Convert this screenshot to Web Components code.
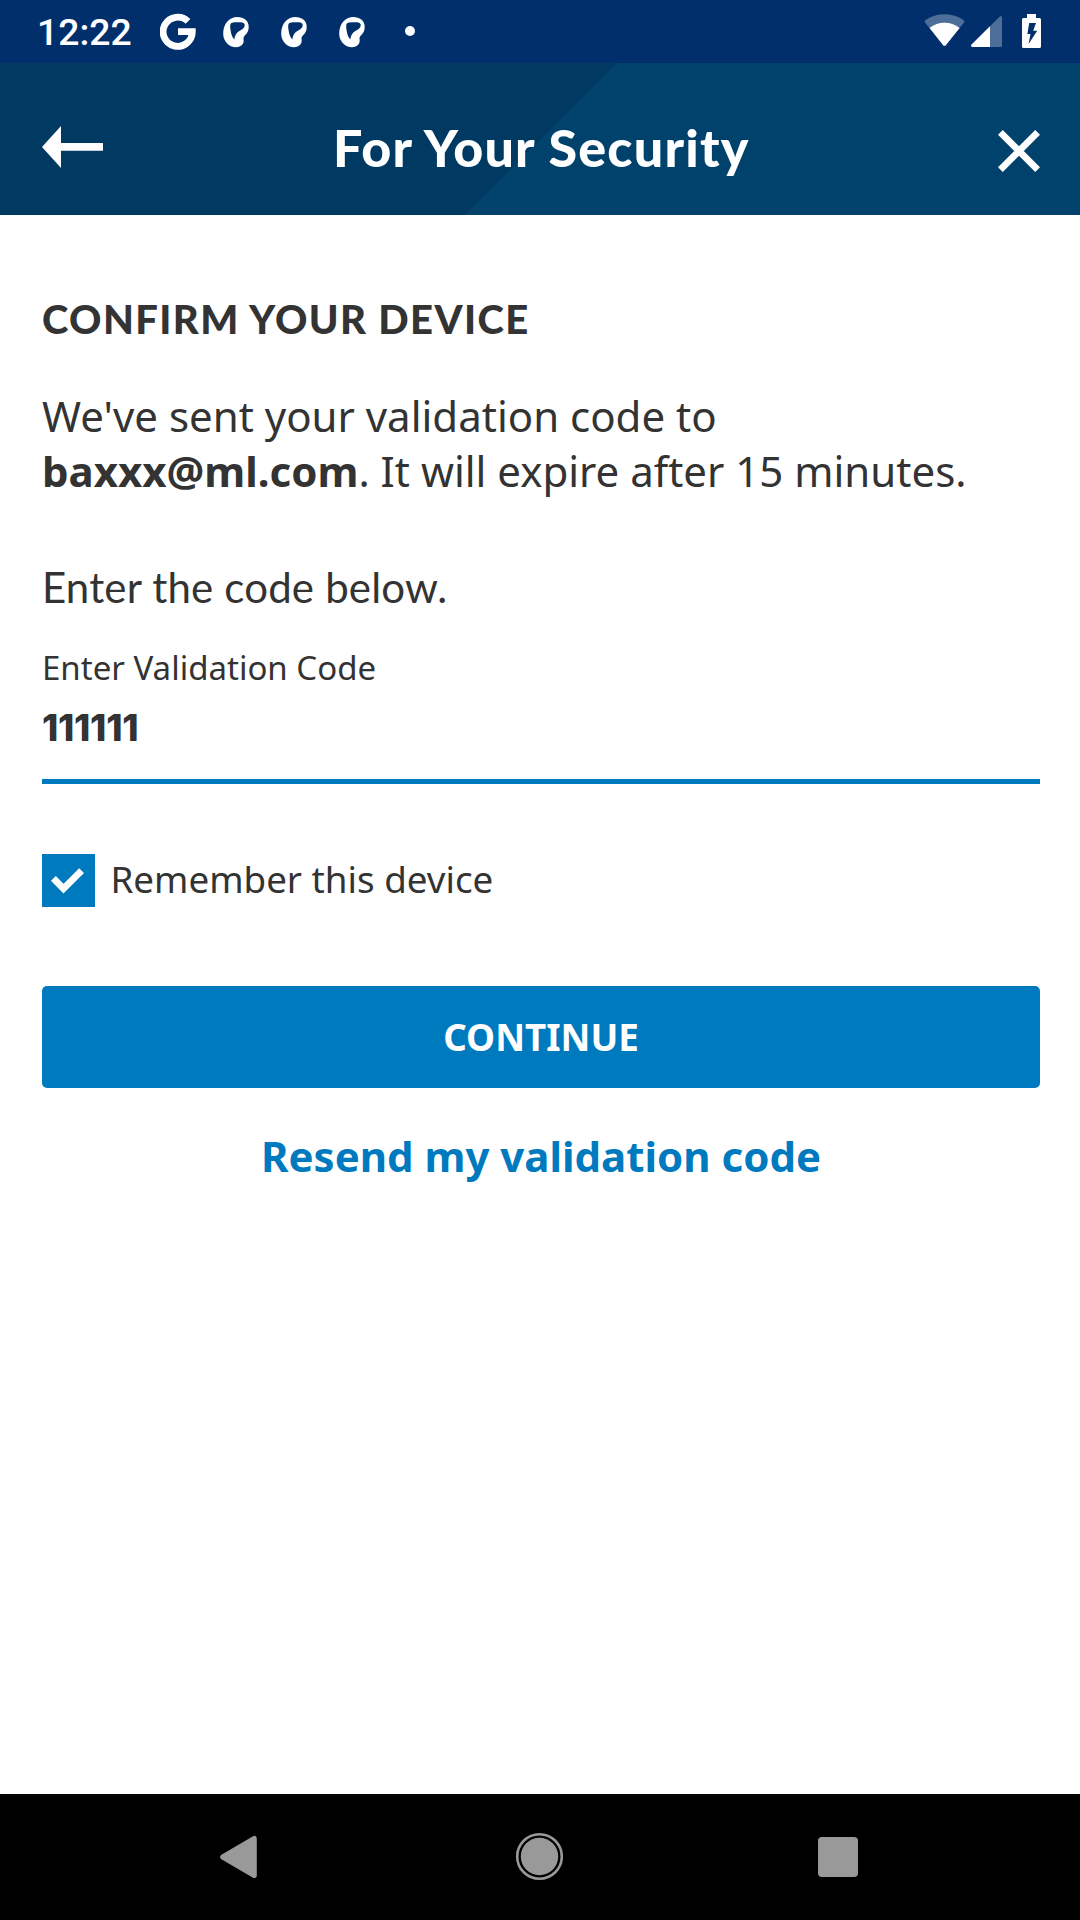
<!DOCTYPE html>
<html lang="en">
<head>
<meta charset="utf-8">
<title>For Your Security</title>
<style>
html, body { margin: 0; height: 100%; background: #fff; }
body { font-family: "Noto Sans", sans-serif; color: #333; }
</style>
</head>
<body>
<device-screen>
  <status-bar slot="status" time="12:22"></status-bar>
  <title-bar slot="header">For Your Security</title-bar>
  <confirm-form>
    <span slot="heading">CONFIRM YOUR DEVICE</span>
    <span slot="message">We've sent your validation code to<br><b>baxxx@ml.com</b>. It will expire after 15 minutes.</span>
    <span slot="prompt">Enter the code below.</span>
    <code-field label="Enter Validation Code" value="111111"></code-field>
    <check-option>Remember this device</check-option>
    <primary-button>CONTINUE</primary-button>
    <link-button>Resend my validation code</link-button>
  </confirm-form>
  <nav-bar slot="nav"></nav-bar>
</device-screen>
<script>
const define = (name, html, setup) => {
  const template = document.createElement('template');
  template.innerHTML = html;
  customElements.define(name, class extends HTMLElement {
    connectedCallback() {
      if (this.shadowRoot) return;
      const root = this.attachShadow({ mode: 'open' });
      root.append(template.content.cloneNode(true));
      if (setup) setup(root, this);
    }
  });
};

define('device-screen', `
<style>
:host { display: flex; flex-direction: column; width: 1080px; height: 1920px; background: #fff; overflow: hidden; }
main { flex: 1; min-height: 0; }
</style>
<slot name="status"></slot>
<slot name="header"></slot>
<main><slot></slot></main>
<slot name="nav"></slot>`);

define('mask-icon', `
<style>:host { display: block; width: 26px; height: 31px; } svg { display: block; }</style>
<svg width="26" height="31" viewBox="0 0 26 31">
  <path fill="#fff" fill-rule="evenodd" d="M14.5 0C20.5 0 25.6 3.4 25.7 9.5C25.8 13.5 24.6 15.6 22.8 17.5C21 19.2 20.2 20.3 20.6 22.5C21.2 26.5 18.6 30.2 13 30.2C6 30.2 .2 24.5 .2 16.5C.2 7 6 0 14.5 0ZM8.3 6C7 7 7 9.5 7.4 12C8 16 8.7 19.8 11.3 22.6C11.8 18.6 13.3 15.7 16.3 14C19.3 12.3 21.7 11 21.7 8C21.7 5.9 19.5 5.2 15.5 5.2C12.5 5.2 9.8 5 8.3 6Z"/>
</svg>`);

define('status-bar', `
<style>
:host { display: flex; box-sizing: border-box; height: 63px; padding: 0 39px 0 37px; background: #002f6c; color: #fff; }
time { font: 500 37.3px/56px Roboto, sans-serif; padding-top: 4px; width: 123px; }
svg { display: block; }
mask-icon { margin: 17px 32px 0 0; }
.g { margin-right: 27px; }
.dot { width: 10px; height: 10px; border-radius: 50%; background: #fff; margin: 26px 0 0 8px; }
.system { margin-left: auto; }
</style>
<time></time>
<svg class="g" width="36" height="63" viewBox="0 0 36 63">
  <path fill="none" stroke="#fff" stroke-width="6.8" d="M28 21.4A14.6 14.6 0 1 0 32.3 31.6L18 31.6"/>
</svg>
<mask-icon></mask-icon><mask-icon></mask-icon><mask-icon></mask-icon>
<span class="dot"></span>
<svg class="system" width="117" height="63" viewBox="924 0 117 63" fill="#fff">
  <path fill="#4d6e98" d="M924.6 22Q924.3 21 925.6 20C936 12.4 953 12.4 963.6 20Q965 21 964.2 22.2L946 45Q944.5 46.7 943 45Z"/>
  <path d="M929.6 27.9C938 21 951 21 959.6 27.9L946 45Q944.5 46.7 943 45Z"/>
  <path fill="#4d6e98" d="M972.5 47Q970 46.3 971.6 44.6L999.8 16.5Q1002 15 1002 17.5V45.5Q1002 47 1000.5 47Z"/>
  <path d="M972.5 47Q970 46.3 971.6 44.6L990 26.2V47Z"/>
  <path fill-rule="evenodd" d="M1027 14H1036V18H1039.5Q1041 18 1041 19.5V46.4Q1041 48 1039.5 48H1023.5Q1022 48 1022 46.4V19.5Q1022 18 1023.5 18H1027ZM1029.2 23L1027.4 34H1030.5L1028.6 44L1037.2 30.8H1033.2L1036 23Z"/>
</svg>`, (root, host) => {
  root.querySelector('time').textContent = host.getAttribute('time');
});

define('title-bar', `
<style>
:host { display: grid; grid-template-columns: 291px 1fr 42px; box-sizing: border-box; height: 152px; padding: 0 40px 0 42px;
  background: linear-gradient(135deg, #003a63 0 50%, #00426c 50%) 464px 0 / 152px 152px no-repeat,
    linear-gradient(90deg, #003a63 0 500px, #00426c 500px); color: #fff; }
h1 { margin: 56px 0 0; font: 900 52px/56px Lato, sans-serif; letter-spacing: 1.22px; white-space: nowrap; }
svg { display: block; }
.back { margin-top: 63px; }
.close { margin-top: 67px; }
</style>
<svg class="back" width="61" height="42" viewBox="0 0 61 42"><path fill="#fff" d="M0 21L19 0V17H61V24.7H19V42Z"/></svg>
<h1><slot></slot></h1>
<svg class="close" width="42" height="42" viewBox="0 0 42 42"><path stroke="#fff" stroke-width="6.8" d="M2.4 2.4L39.6 39.6M39.6 2.4L2.4 39.6"/></svg>`);

define('confirm-form', `
<style>
:host { display: flex; flex-direction: column; padding: 76px 40px 0 42px; }
h2, p { margin: 0; }
h2 { font: 900 40px/56px Lato, sans-serif; letter-spacing: 1.4px; }
.message { margin-top: 41px; font-size: 42px; line-height: 55px; }
.prompt { margin-top: 61px; font: 400 42px/56px Lato, sans-serif; letter-spacing: .18px; }
</style>
<h2><slot name="heading"></slot></h2>
<p class="message"><slot name="message"></slot></p>
<p class="prompt"><slot name="prompt"></slot></p>
<slot></slot>`);

define('code-field', `
<style>
:host { display: flex; flex-direction: column; margin-top: 30px; border-bottom: 5px solid #007abf; }
label { font-size: 33px; line-height: 46px; }
output { margin: 12px 0 26px; font: 800 37px/50px Inter, sans-serif; letter-spacing: -.3px; }
</style>
<label></label><output></output>`, (root, host) => {
  root.querySelector('label').textContent = host.getAttribute('label');
  root.querySelector('output').textContent = host.getAttribute('value');
});

define('check-option', `
<style>
:host { display: flex; align-items: flex-start; gap: 15.5px; margin-top: 70px; height: 53px; font-size: 36.75px; line-height: 51px; }
svg { display: block; }
</style>
<svg width="53" height="53" viewBox="0 0 53 53">
  <rect width="53" height="53" fill="#007abf"/>
  <path fill="none" stroke="#fff" stroke-width="6.8" d="M11.4 24.4L21.5 34.7L39.6 16.6"/>
</svg>
<span><slot></slot></span>`);

define('primary-button', `
<style>
:host { display: block; margin-top: 79px; }
button { display: block; width: 100%; height: 102px; padding: 0; border: 0; border-radius: 5px; background: #007abf; color: #fff;
  font: 700 36.75px/102px "Noto Sans", sans-serif; }
</style>
<button><slot></slot></button>`);

define('link-button', `
<style>
:host { display: block; margin-top: 40px; text-align: center; color: #007abf; font-weight: 700; font-size: 42px; line-height: 56px; }
</style>
<slot></slot>`);

define('nav-bar', `
<style>
:host { display: flex; justify-content: space-between; align-items: flex-start; box-sizing: border-box; height: 126px; padding: 38px 221px 0 219px; background: #000; }
svg { display: block; }
</style>
<svg width="40" height="50" viewBox="0 0 40 50"><path fill="#999" stroke="#999" stroke-width="5" stroke-linejoin="round" d="M3.7 25L35.3 6.4V43.6Z"/></svg>
<svg width="48" height="50" viewBox="0 0 48 50"><circle cx="24.5" cy="24.5" r="22.3" fill="none" stroke="#999" stroke-width="2.6"/><circle cx="24.5" cy="24.5" r="18.7" fill="#999"/></svg>
<svg width="41" height="50" viewBox="0 0 41 50"><rect y="5" width="40" height="40" rx="4" fill="#999"/></svg>`);
</script>
</body>
</html>
